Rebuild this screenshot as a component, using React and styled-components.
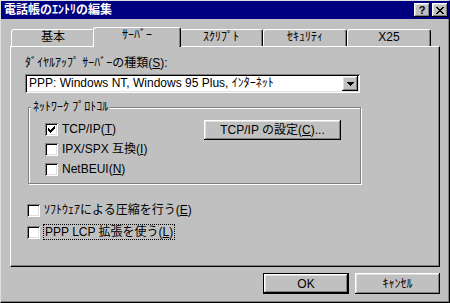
import React from 'react'
import styled, { createGlobalStyle } from 'styled-components'

const GlobalStyle = createGlobalStyle`
    html, body {
        margin: 0;
        padding: 0;
        background: #c0c0c0;
    }
    body {
        font-family: "Liberation Sans", "Noto Sans CJK JP", sans-serif;
        font-size: 12px;
        color: #000;
    }
`

const raised = `
    box-shadow: inset -1px -1px #000, inset 1px 1px #fff, inset -2px -2px #808080, inset 2px 2px #dfdfdf;
`

const sunken = `
    box-shadow: inset 1px 1px #808080, inset -1px -1px #fff, inset 2px 2px #000, inset -2px -2px #dfdfdf;
`

const Janela = styled.div`
    width: 450px;
    height: 303px;
    box-sizing: border-box;
    background: #c0c0c0;
    border-top: 1px solid #dfdfdf;
    border-left: 1px solid #dfdfdf;
    border-right: 1px solid #000;
    border-bottom: 1px solid #000;
    box-shadow: inset -1px -1px #808080;
    display: flex;
    flex-direction: column;
`

const BarraTitulo = styled.div`
    height: 18px;
    background: #000080;
    color: #fff;
    display: flex;
    align-items: center;
    padding: 0 1px 0 3px;
`

const Titulo = styled.span`
    flex: 1;
    font-weight: bold;
    line-height: 18px;
`

const BotoesTitulo = styled.div`
    display: flex;
    gap: 2px;
`

const BotaoTitulo = styled.div`
    width: 16px;
    height: 14px;
    box-sizing: border-box;
    background: #c0c0c0;
    ${raised}
    display: flex;
    align-items: center;
    justify-content: center;
    color: #000;
    font-weight: bold;
    font-size: 11px;
    line-height: 12px;
`

const Abas = styled.div`
    display: flex;
    align-items: flex-end;
    height: 19px;
    margin: 8px 0 0 10px;
`

const Aba = styled.div`
    width: ${props => props.ativa ? 88 : 84}px;
    height: ${props => props.ativa ? 20 : 17}px;
    margin: ${props => props.ativa ? '0 -2px -1px' : '0'};
    position: relative;
    z-index: ${props => props.ativa ? 1 : 0};
    box-sizing: border-box;
    background: #c0c0c0;
    border-top: 1px solid #fff;
    border-left: 1px solid #fff;
    border-right: 1px solid #000;
    border-radius: 3px 3px 0 0;
    box-shadow: inset -1px 0 #808080;
    text-align: center;
    line-height: 15px;
`

const Painel = styled.div`
    margin-left: 9px;
    width: 430px;
    height: 221px;
    box-sizing: border-box;
    border: 1px solid;
    border-color: #fff #000 #000 #fff;
    box-shadow: inset -1px -1px #808080;
    padding: 9px 14px 0 14px;
`

const Rotulo = styled.div`
    line-height: 14px;
    height: 14px;
`

const Selecao = styled.div`
    margin-top: 4px;
    width: 335px;
    height: 19px;
    box-sizing: border-box;
    background: #fff;
    ${sunken}
    display: flex;
    align-items: center;
    padding: 2px;
`

const TextoSelecao = styled.span`
    flex: 1;
    padding-left: 2px;
    line-height: 15px;
    white-space: nowrap;
`

const BotaoSeta = styled.div`
    width: 16px;
    height: 15px;
    box-sizing: border-box;
    background: #c0c0c0;
    ${raised}
    display: flex;
    align-items: center;
    justify-content: center;
`

const Grupo = styled.div`
    position: relative;
    margin: 14px 0 0 3px;
    width: 333px;
    box-sizing: border-box;
    border: 1px solid #808080;
    box-shadow: inset 1px 1px #fff, 1px 1px #fff;
    padding: 11px 19px 4px 16px;
    display: grid;
    grid-template-columns: 1fr 137px;
    grid-auto-rows: 20px;
`

const Legenda = styled.span`
    position: absolute;
    top: -8px;
    left: 2px;
    padding: 0 2px;
    background: #c0c0c0;
    line-height: 14px;
`

const Linha = styled.label`
    grid-column: 1;
    display: flex;
    align-items: center;
    gap: 4px;
    height: 20px;
    margin-left: ${props => props.recuo || 0}px;
    margin-top: ${props => props.topo || 0}px;
    line-height: 14px;
`

const Caixa = styled.span`
    width: 13px;
    height: 13px;
    box-sizing: border-box;
    background: #fff;
    ${sunken}
    display: flex;
    align-items: center;
    justify-content: center;
    flex-shrink: 0;
`

const Foco = styled.span`
    outline: 1px dotted #000;
    padding: 0 1px;
`

const Botao = styled.div`
    width: ${props => props.largura}px;
    height: ${props => props.altura || 21}px;
    box-sizing: border-box;
    background: #c0c0c0;
    ${raised}
    ${props => props.padrao ? 'border: 1px solid #000;' : ''}
    display: flex;
    align-items: center;
    justify-content: center;
    line-height: 14px;
`

const BotaoGrupo = styled(Botao)`
    grid-column: 2;
    grid-row: 1;
    margin-top: 1px;
`

const Opcoes = styled.div`
    margin-top: 16px;
`

const Rodape = styled.div`
    margin: 6px 0 0 9px;
    width: 430px;
    display: flex;
    justify-content: flex-end;
    gap: 6px;
`

const Marca = () => (
    <svg width="7" height="7" viewBox="0 0 7 7">
        <path d="M0 2h1v1h1v1h1V3h1V2h1V1h1V0h1v3H6v1H5v1H4v1H3v1H2V6H1V5H0z" fill="#000" />
    </svg>
)

const CheckBox = ({ marcado, children, ...props }) => (
    <Linha {...props}>
        <Caixa>{marcado && <Marca />}</Caixa>
        <span>{children}</span>
    </Linha>
)

const abas = ['基本', 'ｻｰﾊﾞｰ', 'ｽｸﾘﾌﾟﾄ', 'ｾｷｭﾘﾃｨ', 'X25']

export default function App() {
    return (
        <>
            <GlobalStyle />
            <Janela>
                <BarraTitulo>
                    <Titulo>電話帳のｴﾝﾄﾘの編集</Titulo>
                    <BotoesTitulo>
                        <BotaoTitulo>?</BotaoTitulo>
                        <BotaoTitulo>
                            <svg width="8" height="7" viewBox="0 0 8 7">
                                <path d="M0 0h2v1h1v1h2V1h1V0h2v1H7v1H6v1H5v1h1v1h1v1h1v1H6V6H5V5H3v1H2v1H0V6h1V5h1V4h1V3H2V2H1V1H0z" fill="#000" />
                            </svg>
                        </BotaoTitulo>
                    </BotoesTitulo>
                </BarraTitulo>

                <Abas>
                    {abas.map((nome, i) => (
                        <Aba key={nome} ativa={i === 1}>{nome}</Aba>
                    ))}
                </Abas>

                <Painel>
                    <Rotulo>ﾀﾞｲﾔﾙｱｯﾌﾟ ｻｰﾊﾞｰの種類(<u>S</u>):</Rotulo>
                    <Selecao>
                        <TextoSelecao>PPP: Windows NT, Windows 95 Plus, ｲﾝﾀｰﾈｯﾄ</TextoSelecao>
                        <BotaoSeta>
                            <svg width="7" height="4" viewBox="0 0 7 4">
                                <path d="M0 0h7v1H6v1H5v1H4v1H3V3H2V2H1V1H0z" fill="#000" />
                            </svg>
                        </BotaoSeta>
                    </Selecao>

                    <Grupo>
                        <Legenda>ﾈｯﾄﾜｰｸ ﾌﾟﾛﾄｺﾙ</Legenda>
                        <CheckBox marcado>TCP/IP(<u>T</u>)</CheckBox>
                        <BotaoGrupo largura={137} altura={20}>TCP/IP の設定(<u>C</u>)...</BotaoGrupo>
                        <CheckBox>IPX/SPX 互換(<u>I</u>)</CheckBox>
                        <CheckBox>NetBEUI(<u>N</u>)</CheckBox>
                    </Grupo>

                    <Opcoes>
                        <CheckBox recuo={2}>ｿﾌﾄｳｪｱによる圧縮を行う(<u>E</u>)</CheckBox>
                        <CheckBox recuo={2} topo={2}>
                            <Foco>PPP LCP 拡張を使う(<u>L</u>)</Foco>
                        </CheckBox>
                    </Opcoes>
                </Painel>

                <Rodape>
                    <Botao largura={86} padrao>OK</Botao>
                    <Botao largura={85}>ｷｬﾝｾﾙ</Botao>
                </Rodape>
            </Janela>
        </>
    )
}
